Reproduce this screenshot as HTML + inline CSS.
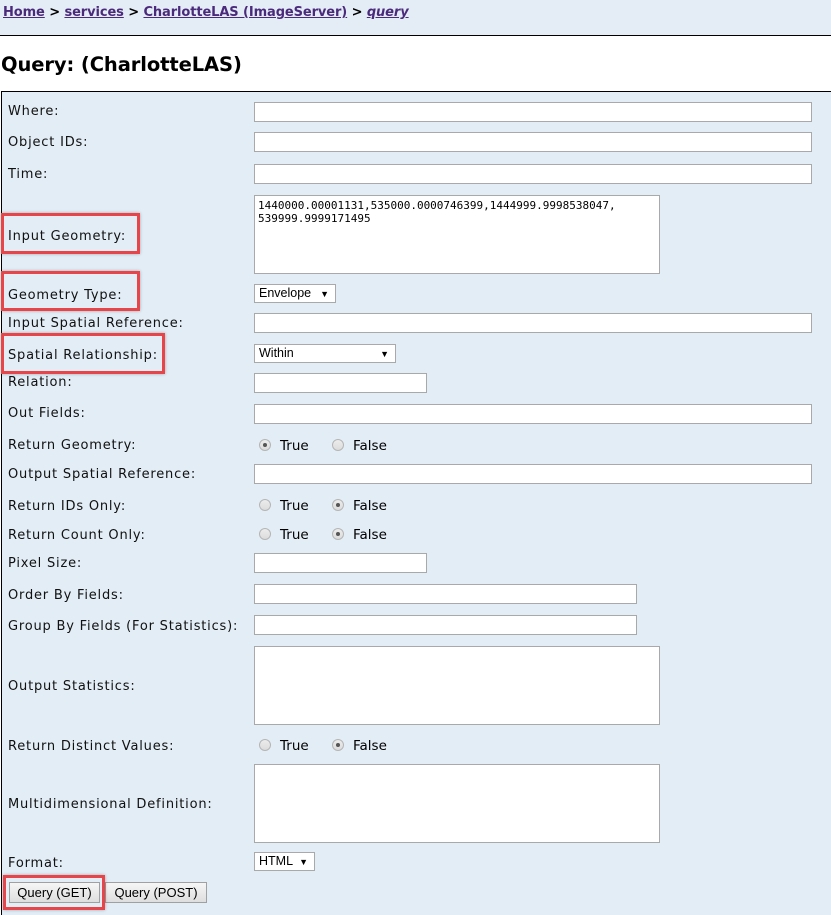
<!DOCTYPE html>
<html><head><meta charset="utf-8"><style>
*{margin:0;padding:0;box-sizing:border-box}
body{width:831px;height:915px;overflow:hidden;background:#fff;font-family:Verdana,"DejaVu Sans",sans-serif;font-size:13px;color:#000;position:relative}
.top{position:absolute;left:0;top:0;width:831px;height:36px;background:#e4edf6;border-bottom:1px solid #000}
.bc{position:absolute;left:3px;top:5px;font-weight:bold;font-size:13px;color:#000;letter-spacing:-0.1px}
.bc a{color:#4b2a7b;text-decoration:underline}
h1{position:absolute;left:1px;top:53px;font-size:19.5px;font-weight:bold;letter-spacing:-0.1px}
.panel{position:absolute;left:1px;top:91px;width:830px;height:824px;background:#e3edf6;border-top:1px solid #000;border-left:1px solid #000}
.l{position:absolute;left:8px;font-size:13px;color:#111;line-height:16px;letter-spacing:0.8px;margin-top:2px}
.i{position:absolute;left:254px;height:20px;background:#fff;border:1px solid #a9a9a9}
.s{position:absolute;left:254px;height:19px;background:#fff;border:1px solid #a9a9a9;font-family:"Liberation Sans",Arial,sans-serif;font-size:12.5px;padding-left:4px;line-height:16px}
.s b{position:absolute;right:6px;top:1px;font-size:9px;font-weight:normal}
.r{position:absolute;width:12px;height:12px;border-radius:50%;border:1px solid #b5b5b5;background:linear-gradient(#ececec,#dcdcdc)}
.r.on::after{content:"";position:absolute;left:3px;top:3px;width:4px;height:4px;border-radius:50%;background:#555}
.t{position:absolute;font-size:13.5px;margin-top:1px}
.red{position:absolute;border:3px solid #e8454a;box-shadow:0 0 3px rgba(0,0,0,.3)}
.btn{position:absolute;top:882px;height:21px;border:1px solid #a0a0a0;background:linear-gradient(#f6f6f6,#dedede);font-family:"Liberation Sans",Arial,sans-serif;font-size:13px;text-align:center;line-height:19px}
.ta{font-family:"DejaVu Sans Mono","Liberation Mono",monospace;font-size:11px;padding:3px;line-height:13px}
</style></head><body>
<div class="top"><div class="bc"><a>Home</a> &gt; <a>services</a> &gt; <a>CharlotteLAS (ImageServer)</a> &gt; <a><i>query</i></a></div></div>
<h1>Query: (CharlotteLAS)</h1>
<div class="panel"></div>

<div class="l" style="top:102px">Where:</div><div class="i" style="top:102px;width:558px"></div>
<div class="l" style="top:133px">Object IDs:</div><div class="i" style="top:132px;width:558px"></div>
<div class="l" style="top:165px">Time:</div><div class="i" style="top:164px;width:558px"></div>
<div class="l" style="top:227px">Input Geometry:</div><div class="i ta" style="top:195px;width:406px;height:79px">1440000.00001131,535000.0000746399,1444999.9998538047,<br>539999.9999171495</div>
<div class="l" style="top:286px">Geometry Type:</div><div class="s" style="top:284px;width:82px">Envelope<b>▼</b></div>
<div class="l" style="top:314px">Input Spatial Reference:</div><div class="i" style="top:313px;width:558px"></div>
<div class="l" style="top:346px">Spatial Relationship:</div><div class="s" style="top:344px;width:142px">Within<b>▼</b></div>
<div class="l" style="top:373px">Relation:</div><div class="i" style="top:373px;width:173px"></div>
<div class="l" style="top:404px">Out Fields:</div><div class="i" style="top:404px;width:558px"></div>
<div class="l" style="top:436px">Return Geometry:</div>
<div class="r on" style="left:259px;top:439px"></div><div class="t" style="left:280px;top:437px">True</div>
<div class="r" style="left:332px;top:439px"></div><div class="t" style="left:353px;top:437px">False</div>
<div class="l" style="top:465px">Output Spatial Reference:</div><div class="i" style="top:464px;width:558px"></div>
<div class="l" style="top:497px">Return IDs Only:</div>
<div class="r" style="left:259px;top:499px"></div><div class="t" style="left:280px;top:497px">True</div>
<div class="r on" style="left:332px;top:499px"></div><div class="t" style="left:353px;top:497px">False</div>
<div class="l" style="top:526px">Return Count Only:</div>
<div class="r" style="left:259px;top:528px"></div><div class="t" style="left:280px;top:526px">True</div>
<div class="r on" style="left:332px;top:528px"></div><div class="t" style="left:353px;top:526px">False</div>
<div class="l" style="top:554px">Pixel Size:</div><div class="i" style="top:553px;width:173px"></div>
<div class="l" style="top:586px">Order By Fields:</div><div class="i" style="top:584px;width:383px"></div>
<div class="l" style="top:617px">Group By Fields (For Statistics):</div><div class="i" style="top:615px;width:383px"></div>
<div class="l" style="top:677px">Output Statistics:</div><div class="i" style="top:646px;width:406px;height:79px"></div>
<div class="l" style="top:737px">Return Distinct Values:</div>
<div class="r" style="left:259px;top:739px"></div><div class="t" style="left:280px;top:737px">True</div>
<div class="r on" style="left:332px;top:739px"></div><div class="t" style="left:353px;top:737px">False</div>
<div class="l" style="top:795px">Multidimensional Definition:</div><div class="i" style="top:764px;width:406px;height:79px"></div>
<div class="l" style="top:854px">Format:</div><div class="s" style="top:852px;width:61px">HTML<b>▼</b></div>
<div class="btn" style="left:9px;width:91px">Query (GET)</div>
<div class="btn" style="left:105px;width:102px">Query (POST)</div>

<div class="red" style="left:1px;top:213px;width:139px;height:41px"></div>
<div class="red" style="left:1px;top:271px;width:139px;height:40px"></div>
<div class="red" style="left:1px;top:333px;width:164px;height:41px"></div>
<div class="red" style="left:3px;top:875px;width:102px;height:35px"></div>
</body></html>
